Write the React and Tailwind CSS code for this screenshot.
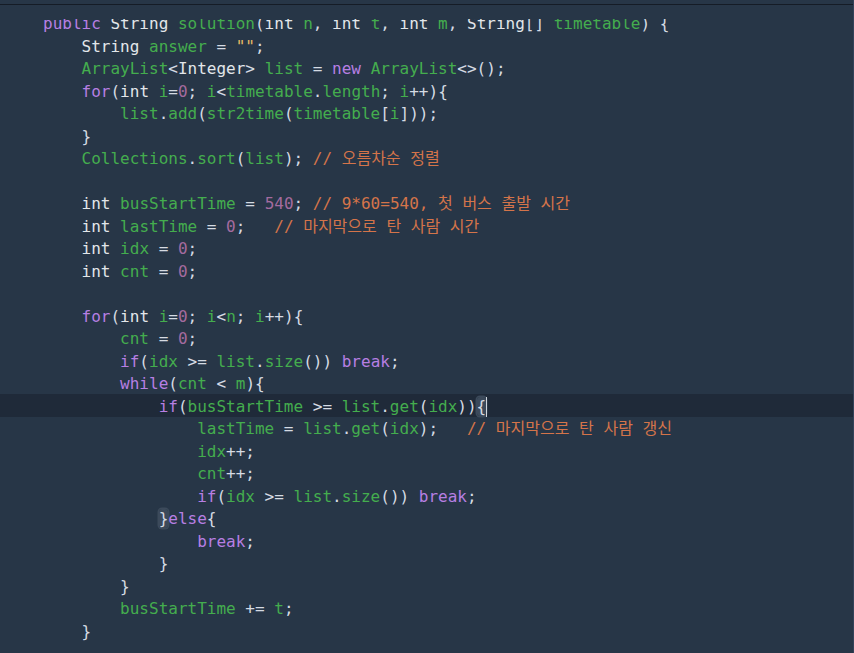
const KEYWORDS = new Set(["public", "new", "for", "if", "while", "break", "else"]);
const TYPES = new Set(["String", "int", "Integer"]);

const COLORS = {
  kw: "text-[#b77fe3]",
  type: "text-[#e2e6ea]",
  ident: "text-[#44ad4e]",
  num: "text-[#a46b9f]",
  string: "text-[#e6b865]",
  punct: "text-[#d5dbe3]",
  comment: "text-[#d4744a]",
  ws: "",
};

const LINES = [
  { code: "    public String solution(int n, int t, int m, String[] timetable) {" },
  { code: '        String answer = "";' },
  { code: "        ArrayList<Integer> list = new ArrayList<>();" },
  { code: "        for(int i=0; i<timetable.length; i++){" },
  { code: "            list.add(str2time(timetable[i]));" },
  { code: "        }" },
  { code: "        Collections.sort(list); // 오름차순 정렬" },
  { code: "" },
  { code: "        int busStartTime = 540; // 9*60=540, 첫 버스 출발 시간" },
  { code: "        int lastTime = 0;   // 마지막으로 탄 사람 시간" },
  { code: "        int idx = 0;" },
  { code: "        int cnt = 0;" },
  { code: "" },
  { code: "        for(int i=0; i<n; i++){" },
  { code: "            cnt = 0;" },
  { code: "            if(idx >= list.size()) break;" },
  { code: "            while(cnt < m){" },
  { code: "                if(busStartTime >= list.get(idx)){", active: true, match: 49, cursor: true },
  { code: "                    lastTime = list.get(idx);   // 마지막으로 탄 사람 갱신" },
  { code: "                    idx++;" },
  { code: "                    cnt++;" },
  { code: "                    if(idx >= list.size()) break;" },
  { code: "                }else{", match: 16 },
  { code: "                    break;" },
  { code: "                }" },
  { code: "            }" },
  { code: "            busStartTime += t;" },
  { code: "        }" },
];

function tokenize(line) {
  const tokens = [];
  let code = line;
  let comment = null;
  const ci = line.indexOf("//");
  if (ci !== -1) {
    code = line.slice(0, ci);
    comment = line.slice(ci);
  }
  const re = /("[^"]*")|([A-Za-z_]\w*)|(\d+)|(\s+)|(.)/g;
  let m;
  while ((m = re.exec(code))) {
    const [text, str, word, num, ws] = m;
    let type = "punct";
    if (str) type = "string";
    else if (word) type = KEYWORDS.has(word) ? "kw" : TYPES.has(word) ? "type" : "ident";
    else if (num) type = "num";
    else if (ws) type = "ws";
    tokens.push({ text, type, col: m.index });
  }
  if (comment) tokens.push({ text: comment, type: "comment", col: ci });
  return tokens;
}

const CodeLine = ({ line }) => {
  const tokens = tokenize(line.code);
  return (
    <div className={`h-[22.5px] ${line.active ? "bg-[#1f2a39]" : ""}`}>
      <div className="whitespace-pre pl-[4.5px] pt-[1.5px]">
        {tokens.map((t, i) => {
          if (line.match !== undefined && t.col === line.match) {
            return (
              <span key={i}>
                <span className={`${COLORS[t.type]} rounded-[3px] bg-[#3c4a5b] shadow-[0_0_0_1.5px_#3c4a5b]`}>
                  {t.text}
                </span>
                {line.cursor && (
                  <span className="inline-block h-[20px] w-0 border-l border-[#cfd6de] align-[-5px]" />
                )}
              </span>
            );
          }
          return (
            <span key={i} className={COLORS[t.type]}>
              {t.text}
            </span>
          );
        })}
      </div>
    </div>
  );
};

const App = () => {
  const [first, ...rest] = LINES;

  return (
    <div className="h-screen overflow-hidden border-r border-[#33435a] bg-[#273647] font-['DejaVu_Sans_Mono','Noto_Sans_CJK_KR',monospace] text-[16px] leading-[22.5px]">
      {/* top edge */}
      <div className="h-[4px]" />
      <div className="h-px bg-[#151c26]" />

      {/* first line is cut off by the scroll edge */}
      <div className="mt-[14.25px] h-[14.75px] overflow-hidden">
        <div className="mt-[-7.75px]">
          <CodeLine line={first} />
        </div>
      </div>

      {rest.map((line, i) => (
        <CodeLine key={i} line={line} />
      ))}
    </div>
  );
};

export default App;
